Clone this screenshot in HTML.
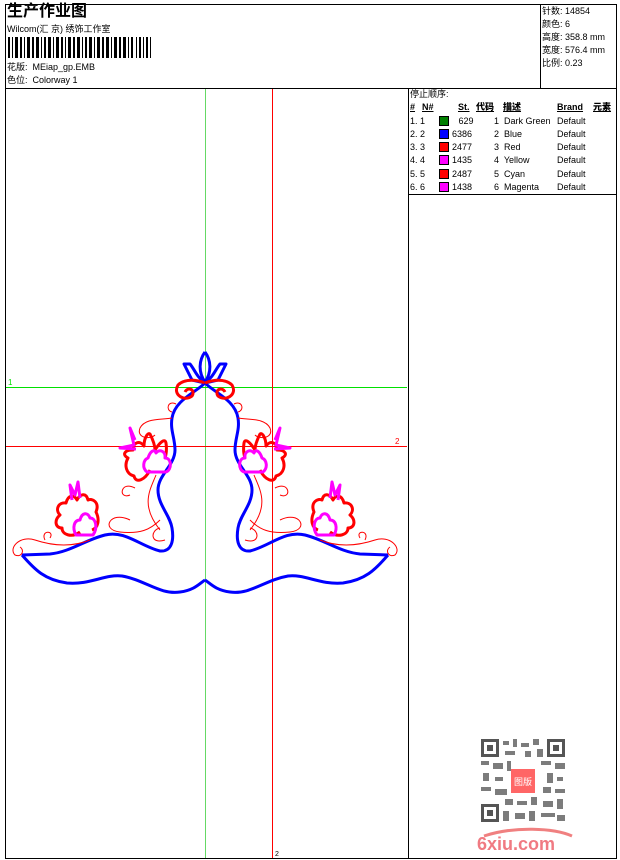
<!DOCTYPE html>
<html><head><meta charset="utf-8"><style>
body{margin:0;width:620px;height:860px;background:#fff;position:relative;overflow:hidden;font-family:"Liberation Sans","Noto Sans CJK SC",sans-serif;font-size:9px;color:#000}
.a{position:absolute;white-space:nowrap;line-height:11px}
.l{position:absolute;background:#000}
.sw{position:absolute;width:10px;height:10px;border:1px solid #000;box-sizing:border-box}
b.u{text-decoration:underline}
</style></head><body>
<div class="l" style="left:5px;top:4px;width:612px;height:1px"></div>
<div class="l" style="left:5px;top:4px;width:1px;height:855px"></div>
<div class="l" style="left:616px;top:4px;width:1px;height:855px"></div>
<div class="l" style="left:5px;top:858px;width:612px;height:1px"></div>
<div class="l" style="left:5px;top:88px;width:612px;height:1px"></div>
<div class="l" style="left:540px;top:4px;width:1px;height:84px"></div>
<div class="l" style="left:408px;top:88px;width:1px;height:770px"></div>
<div class="l" style="left:408px;top:194px;width:209px;height:1px"></div>

<div class="a" style="left:7px;top:3px;font-size:16px;line-height:17px;font-weight:bold">生产作业图</div>
<div class="a" style="left:7px;top:24px">Wilcom(汇 京) 绣饰工作室</div>
<svg style="position:absolute;left:8px;top:37px" width="145" height="21">
<g fill="#000">
<rect x="0" y="0" width="2" height="21"/><rect x="4" y="0" width="1" height="21"/><rect x="7" y="0" width="3" height="21"/><rect x="12" y="0" width="2" height="21"/><rect x="16" y="0" width="1" height="21"/><rect x="19" y="0" width="3" height="21"/><rect x="24" y="0" width="2" height="21"/><rect x="28" y="0" width="3" height="21"/><rect x="33" y="0" width="1" height="21"/><rect x="36" y="0" width="2" height="21"/><rect x="40" y="0" width="3" height="21"/><rect x="45" y="0" width="1" height="21"/><rect x="48" y="0" width="3" height="21"/><rect x="53" y="0" width="2" height="21"/><rect x="57" y="0" width="1" height="21"/><rect x="60" y="0" width="3" height="21"/><rect x="65" y="0" width="2" height="21"/><rect x="69" y="0" width="3" height="21"/><rect x="74" y="0" width="1" height="21"/><rect x="77" y="0" width="2" height="21"/><rect x="81" y="0" width="3" height="21"/><rect x="86" y="0" width="1" height="21"/><rect x="89" y="0" width="3" height="21"/><rect x="94" y="0" width="2" height="21"/><rect x="98" y="0" width="3" height="21"/><rect x="103" y="0" width="1" height="21"/><rect x="106" y="0" width="3" height="21"/><rect x="111" y="0" width="2" height="21"/><rect x="115" y="0" width="3" height="21"/><rect x="120" y="0" width="1" height="21"/><rect x="123" y="0" width="2" height="21"/><rect x="128" y="0" width="1" height="21"/><rect x="131" y="0" width="2" height="21"/><rect x="135" y="0" width="1" height="21"/><rect x="138" y="0" width="2" height="21"/><rect x="142" y="0" width="1" height="21"/>
</g></svg>
<div class="a" style="left:7px;top:62px">花版:&nbsp; MEiap_gp.EMB</div>
<div class="a" style="left:7px;top:75px">色位:&nbsp; Colorway 1</div>

<div class="a" style="left:542px;top:6px">针数: 14854</div>
<div class="a" style="left:542px;top:19px">颜色: 6</div>
<div class="a" style="left:542px;top:32px">高度: 358.8 mm</div>
<div class="a" style="left:542px;top:45px">宽度: 576.4 mm</div>
<div class="a" style="left:542px;top:58px">比例: 0.23</div>

<div class="a" style="left:410px;top:89px">停止顺序:</div>
<div class="a" style="left:410px;top:102px;font-weight:bold"><b class="u">#</b></div>
<div class="a" style="left:422px;top:102px;font-weight:bold"><b class="u">N#</b></div>
<div class="a" style="left:458px;top:102px;font-weight:bold"><b class="u">St.</b></div>
<div class="a" style="left:476px;top:102px;font-weight:bold"><b class="u">代码</b></div>
<div class="a" style="left:503px;top:102px;font-weight:bold"><b class="u">描述</b></div>
<div class="a" style="left:557px;top:102px;font-weight:bold"><b class="u">Brand</b></div>
<div class="a" style="left:593px;top:102px;font-weight:bold"><b class="u">元素</b></div>

<div class="a" style="left:410px;top:116px">1. 1</div><div class="sw" style="left:439px;top:116px;background:#008000"></div><div class="a" style="left:456px;top:116px">&nbsp;629</div><div class="a" style="left:494px;top:116px">1&nbsp; Dark Green</div><div class="a" style="left:557px;top:116px">Default</div>
<div class="a" style="left:410px;top:129px">2. 2</div><div class="sw" style="left:439px;top:129px;background:#0000ff"></div><div class="a" style="left:452px;top:129px">6386</div><div class="a" style="left:494px;top:129px">2&nbsp; Blue</div><div class="a" style="left:557px;top:129px">Default</div>
<div class="a" style="left:410px;top:142px">3. 3</div><div class="sw" style="left:439px;top:142px;background:#ff0000"></div><div class="a" style="left:452px;top:142px">2477</div><div class="a" style="left:494px;top:142px">3&nbsp; Red</div><div class="a" style="left:557px;top:142px">Default</div>
<div class="a" style="left:410px;top:155px">4. 4</div><div class="sw" style="left:439px;top:155px;background:#ff00ff"></div><div class="a" style="left:452px;top:155px">1435</div><div class="a" style="left:494px;top:155px">4&nbsp; Yellow</div><div class="a" style="left:557px;top:155px">Default</div>
<div class="a" style="left:410px;top:169px">5. 5</div><div class="sw" style="left:439px;top:169px;background:#ff0000"></div><div class="a" style="left:452px;top:169px">2487</div><div class="a" style="left:494px;top:169px">5&nbsp; Cyan</div><div class="a" style="left:557px;top:169px">Default</div>
<div class="a" style="left:410px;top:182px">6. 6</div><div class="sw" style="left:439px;top:182px;background:#ff00ff"></div><div class="a" style="left:452px;top:182px">1438</div><div class="a" style="left:494px;top:182px">6&nbsp; Magenta</div><div class="a" style="left:557px;top:182px">Default</div>

<svg style="position:absolute;left:0;top:0" width="620" height="860">
<line x1="205.5" y1="89" x2="205.5" y2="858" stroke="#00c000" stroke-width="1" opacity="0.6"/>
<line x1="6" y1="387.5" x2="407" y2="387.5" stroke="#00e000" stroke-width="1"/>
<line x1="272.5" y1="89" x2="272.5" y2="858" stroke="#ff0000" stroke-width="1"/>
<line x1="6" y1="446.5" x2="407" y2="446.5" stroke="#ff0000" stroke-width="1"/>
<text x="8" y="385" fill="#00e000" font-size="8" font-family="Liberation Sans">1</text>
<text x="395" y="444" fill="#ff0000" font-size="8" font-family="Liberation Sans">2</text>
<text x="275" y="856" fill="#000" font-size="7" font-family="Liberation Sans">2</text>
<g id="half" fill="none" stroke-linejoin="round">
<path d="M22,555 L50,554 C70,552 85,540 105,535 C125,530 140,546 160,551 C172,552 174,540 172,528 C170,515 158,505 158,490 C158,475 175,465 175,450 C175,438 170,430 172,418 C175,400 195,393 205,383" stroke="#0000ff" stroke-width="3"/>
<path d="M22,555 C35,570 45,580 67,583 C90,585 105,574 122,576 C145,580 160,595 180,592 C195,590 200,583 205,580" stroke="#0000ff" stroke-width="3"/>
<path d="M205,352 C199,360 198,372 205,382 M205,382 C197,378 195,370 190,364 L184,364 L192,380 L205,383" stroke="#0000ff" stroke-width="3"/>
<path d="M205,383 C198,380 185,378 178,385 C172,395 185,402 192,396 C196,390 188,386 185,392" stroke="#ff0000" stroke-width="3"/>
<path d="M176,404 C168,400 165,410 172,412 M172,418 C160,420 145,418 140,428 C136,438 150,440 155,435" stroke="#ff0000" stroke-width="1"/>
<path d="M150,470 C145,480 136,484 134,476 C126,474 124,465 128,458 C122,455 124,450 133,450 C133,442 140,440 144,446 C144,438 148,432 150,434 C153,440 155,445 155,450 C160,442 165,438 166,443 C167,450 166,455 165,458" stroke="#ff0000" stroke-width="3"/>
<path d="M147,472 C142,468 143,460 148,458 C150,452 154,448 156,453 C160,448 166,452 165,458 C172,458 172,470 166,472 Z" stroke="#ff00ff" stroke-width="3"/>
<path d="M135,440 L130,428 L134,445 L120,448 L136,449" stroke="#ff00ff" stroke-width="3"/>
<path d="M156,475 C150,490 140,505 160,530 M135,488 C120,480 118,500 130,495 M130,520 C110,510 100,530 120,532 C140,534 150,530 160,520 M165,540 C150,545 150,530 160,528" stroke="#ff0000" stroke-width="1"/>
<path d="M80,532 C72,538 62,535 62,528 C55,528 54,520 60,515 C55,510 58,502 66,503 C68,495 74,494 77,500 C80,494 86,492 88,500 C92,498 100,502 96,512 C100,520 98,528 92,530" stroke="#ff0000" stroke-width="3"/>
<path d="M76,535 C72,528 74,520 80,520 C82,512 88,512 90,518 C96,518 98,528 93,535 Z" stroke="#ff00ff" stroke-width="3"/>
<path d="M72,500 L70,485 L75,495 L78,482 L80,498" stroke="#ff00ff" stroke-width="3"/>
<path d="M90,540 C70,548 50,545 35,540 C20,535 8,548 15,555 C22,558 25,550 20,547 M45,540 C40,530 55,530 50,538" stroke="#ff0000" stroke-width="1"/>
</g>
<use href="#half" transform="translate(410,0) scale(-1,1)"/>
</svg>

<svg style="position:absolute;left:481px;top:739px" width="84" height="83">
<g fill="#555">
<rect x="0" y="0" width="18" height="18"/><rect x="66" y="0" width="18" height="18"/><rect x="0" y="65" width="18" height="18"/>
</g>
<g fill="#fff"><rect x="3" y="3" width="12" height="12"/><rect x="69" y="3" width="12" height="12"/><rect x="3" y="68" width="12" height="12"/></g>
<g fill="#555"><rect x="6" y="6" width="6" height="6"/><rect x="72" y="6" width="6" height="6"/><rect x="6" y="71" width="6" height="6"/></g>
<g fill="#666" opacity="0.85">
<rect x="22" y="2" width="6" height="4"/><rect x="32" y="0" width="4" height="8"/><rect x="40" y="4" width="8" height="4"/><rect x="52" y="0" width="6" height="6"/><rect x="24" y="12" width="10" height="4"/><rect x="44" y="12" width="6" height="6"/><rect x="56" y="10" width="6" height="8"/>
<rect x="0" y="22" width="8" height="4"/><rect x="12" y="24" width="10" height="6"/><rect x="26" y="22" width="4" height="10"/><rect x="60" y="22" width="10" height="4"/><rect x="74" y="24" width="10" height="6"/>
<rect x="2" y="34" width="6" height="8"/><rect x="14" y="38" width="8" height="4"/><rect x="66" y="34" width="6" height="10"/><rect x="76" y="38" width="6" height="4"/>
<rect x="0" y="48" width="10" height="4"/><rect x="14" y="50" width="12" height="6"/><rect x="62" y="48" width="8" height="6"/><rect x="74" y="50" width="10" height="4"/>
<rect x="24" y="60" width="8" height="6"/><rect x="36" y="62" width="10" height="4"/><rect x="50" y="58" width="6" height="8"/><rect x="62" y="62" width="10" height="6"/><rect x="76" y="60" width="6" height="10"/>
<rect x="22" y="72" width="6" height="10"/><rect x="34" y="74" width="10" height="6"/><rect x="48" y="72" width="6" height="10"/><rect x="60" y="74" width="14" height="4"/><rect x="76" y="76" width="8" height="6"/>
</g>
<rect x="30" y="30" width="24" height="24" fill="#ff6666"/>
<text x="42" y="46" fill="#fff" font-size="9" text-anchor="middle" font-family="Noto Sans CJK SC">图版</text>
</svg>
<svg style="position:absolute;left:474px;top:826px" width="102" height="28">
<path d="M10,10 C40,0 80,2 98,10" stroke="#f08080" stroke-width="3" fill="none"/>
<text x="3" y="24" fill="#f07a82" font-size="18" font-weight="bold" font-family="Liberation Sans">6xiu.com</text>
</svg>
</body></html>
